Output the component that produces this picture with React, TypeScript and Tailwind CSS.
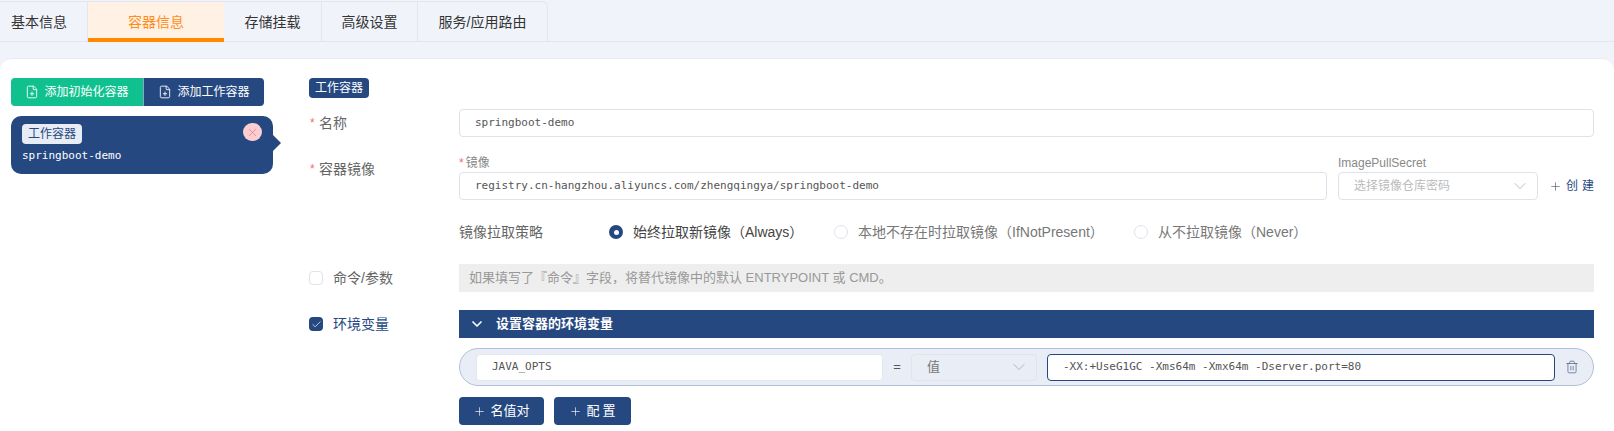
import React from 'react';
import { Check, ChevronDown, FilePlus, Plus, Trash2, X } from 'lucide-react';

const cjk = '[font-family:"Liberation_Sans","Noto_Sans_CJK_SC",sans-serif]';
const inputText = 'font-["DejaVu_Sans_Mono","Noto_Sans_CJK_SC",monospace] text-[11px] text-[#555]';

function Tabs() {
  const tabs = [
    { label: '基本信息', width: 'w-[88px] pl-[11px] justify-start' },
    { label: '容器信息', width: 'w-[136px] justify-center', active: true },
    { label: '存储挂载', width: 'w-[98px] justify-center' },
    { label: '高级设置', width: 'w-[96px] justify-center' },
    { label: '服务/应用路由', width: 'w-[130px] justify-center rounded-tr-md border-r' },
  ];

  return (
    <div className="h-[42px] pt-[1px] border-b border-[#e2e6ef] flex">
      {tabs.map((tab) => (
        <div
          key={tab.label}
          className={`h-[41px] flex items-center text-[14px] border-t border-[#e2e6ef] ${tab.width} ${
            tab.active
              ? 'bg-[#fff1e3] text-[#ff8c1a] border-b-4 border-b-[#ff8a00] pt-[4px]'
              : 'text-[#333] border-r border-r-[#e2e6ef]'
          }`}
        >
          {tab.label}
        </div>
      ))}
    </div>
  );
}

function Sidebar() {
  return (
    <div className="w-[309px] shrink-0 pl-[11px] pt-[19.5px]">
      <div className="flex w-[253px] h-[28px] text-white text-[12px]">
        <button className="w-[133px] bg-[#10c18f] rounded-l flex items-center justify-center gap-[5px] border-r border-[#8fa3c4]">
          <FilePlus size={14} strokeWidth={1.5} />
          添加初始化容器
        </button>
        <button className="flex-1 bg-[#254881] rounded-r flex items-center justify-center gap-[5px]">
          <FilePlus size={14} strokeWidth={1.5} />
          添加工作容器
        </button>
      </div>

      <div className="relative mt-[10px] w-[262px] h-[58px] bg-[#254881] rounded-[10px] pl-[11px] pt-[8px]">
        <div className="flex h-[20px] w-[60px] items-center justify-center rounded bg-[#e8ecf4] text-[#254881] text-[12px]">
          工作容器
        </div>
        <div className={`${inputText} !text-white mt-[4px] leading-[16px]`}>springboot-demo</div>
        <span className="absolute right-[11px] top-[7px] w-[19px] h-[18px] rounded-full bg-[#fbcfd2] flex items-center justify-center text-[#f0666f]">
          <X size={13} strokeWidth={1.2} />
        </span>
        {/* small pointer on the right edge */}
        <span className="absolute left-full top-[19px] w-0 h-0 border-y-[8px] border-y-transparent border-l-[8px] border-l-[#254881]" />
      </div>
    </div>
  );
}

function Label({ children, required }: { children: React.ReactNode; required?: boolean }) {
  return (
    <div className="w-[150px] shrink-0 flex items-center text-[14px] text-[#666] h-[28px] pl-[1px]">
      {required && <span className="text-[#f56c6c] text-[12px] w-[9px]">*</span>}
      {children}
    </div>
  );
}

function TextBox({ value, className = '' }: { value: string; className?: string }) {
  return (
    <div className={`h-[28px] flex items-center bg-white rounded border border-[#dfe2ea] pl-[15px] ${inputText} ${className}`}>
      {value}
    </div>
  );
}

function Radio({ label, checked, className }: { label: string; checked?: boolean; className: string }) {
  return (
    <div className={`flex items-center gap-[10px] text-[14px] ${checked ? 'text-[#444]' : 'text-[#777]'} ${className}`}>
      {checked ? (
        <span className="w-[14px] h-[14px] rounded-full bg-[#254881] flex items-center justify-center">
          <span className="w-[5px] h-[5px] rounded-full bg-white" />
        </span>
      ) : (
        <span className="w-[14px] h-[14px] rounded-full border border-[#dfe2ea] bg-white" />
      )}
      {label}
    </div>
  );
}

function Form() {
  return (
    <div className="flex-1 pr-[20px] pt-[19.5px]">
      <div className="flex h-[20px] w-[60px] items-center justify-center rounded bg-[#254881] text-white text-[12px]">
        工作容器
      </div>

      <div className="flex mt-[11px]">
        <Label required>名称</Label>
        <TextBox value="springboot-demo" className="flex-1" />
      </div>

      <div className="flex mt-[18px]">
        <Label required>容器镜像</Label>
        <div className="flex-1">
          <div className="flex gap-[11px]">
            <div className="flex-1">
              <div className="h-[17px] text-[12px] leading-[17px] text-[#888]">
                <span className="text-[#f56c6c] mr-[2px]">*</span>镜像
              </div>
              <TextBox value="registry.cn-hangzhou.aliyuncs.com/zhengqingya/springboot-demo" />
            </div>
            <div className="w-[200px]">
              <div className="h-[17px] text-[12px] leading-[17px] text-[#888]">ImagePullSecret</div>
              <div className="h-[28px] flex items-center justify-between rounded border border-[#dfe2ea] pl-[15px] pr-[7px] text-[12px] text-[#bbb]">
                选择镜像仓库密码
                <ChevronDown size={20} strokeWidth={0.8} className="text-[#999]" />
              </div>
            </div>
            <div className="w-[45px] h-[28px] mt-[17px] flex items-center justify-between text-[12px] text-[#254881]">
              <Plus size={13} strokeWidth={1.2} className="text-[#555]" />
              <span className="tracking-[4px] mr-[-4px]">创建</span>
            </div>
          </div>

          <div className="flex items-center h-[28px] mt-[18px] text-[14px] text-[#666]">
            <span className="w-[150px]">镜像拉取策略</span>
            <Radio checked label="始终拉取新镜像（Always）" className="w-[225px]" />
            <Radio label="本地不存在时拉取镜像（IfNotPresent）" className="w-[300px]" />
            <Radio label="从不拉取镜像（Never）" className="" />
          </div>
        </div>
      </div>

      <div className="flex mt-[18px]">
        <div className="w-[150px] shrink-0 flex items-center gap-[10px] h-[28px] text-[14px] text-[#666]">
          <span className="w-[14px] h-[14px] rounded-sm border border-[#dfe2ea] bg-white" />
          命令/参数
        </div>
        <div className="flex-1 h-[28px] bg-[#eeeeee] flex items-center pl-[10px] text-[13px] text-[#999]">
          如果填写了『命令』字段，将替代镜像中的默认 ENTRYPOINT 或 CMD。
        </div>
      </div>

      <div className="flex mt-[18px]">
        <div className="w-[150px] shrink-0 flex items-center gap-[10px] h-[28px] text-[14px] text-[#254881]">
          <span className="w-[14px] h-[14px] rounded-sm bg-[#254881] flex items-center justify-center text-white">
            <Check size={11} strokeWidth={1.5} />
          </span>
          环境变量
        </div>
        <div className="flex-1 min-w-0">
          <div className="h-[28px] bg-[#254881] flex items-center text-white text-[13px] font-bold pl-[8px] gap-[9px]">
            <ChevronDown size={20} strokeWidth={2.5} className="w-[20px] h-[16px]" />
            设置容器的环境变量
          </div>

          <div className="h-[38px] mt-[10px] rounded-full bg-[#e9edf5] border border-[#b3c0d6] flex items-center pl-[16px]">
            <TextBox value="JAVA_OPTS" className="w-[407px] !h-[27px] !border-[#e4e7ef]" />
            <span className="w-[28px] text-center text-[13px] text-[#555]">=</span>
            <div className="w-[126px] h-[27px] flex items-center justify-between rounded border border-[#dfe3ec] pl-[15px] pr-[7px] text-[13px] text-[#777]">
              值
              <ChevronDown size={20} strokeWidth={0.8} className="text-[#999]" />
            </div>
            <TextBox value="-XX:+UseG1GC -Xms64m -Xmx64m -Dserver.port=80" className="w-[508px] !h-[27px] ml-[10px] !border-[#254881]" />
            <Trash2 size={14} strokeWidth={1.2} className="ml-[10px] text-[#4a5f85]" />
          </div>

          <div className="flex gap-[10px] mt-[11px] text-white text-[13px]">
            <button className="w-[85px] h-[28px] bg-[#254881] rounded flex items-center justify-center gap-[4px]">
              <Plus size={13} strokeWidth={1.2} />
              名值对
            </button>
            <button className="w-[77px] h-[28px] bg-[#254881] rounded flex items-center justify-center gap-[4px]">
              <Plus size={13} strokeWidth={1.2} />
              <span className="tracking-[3px] mr-[-3px]">配置</span>
            </button>
          </div>
        </div>
      </div>
    </div>
  );
}

export default function App() {
  return (
    <div className={`w-[1614px] h-[431px] overflow-hidden bg-[#f0f3fa] ${cjk}`}>
      <Tabs />
      <div className="mt-[15.5px] h-[374px] bg-white rounded-t-xl border-t border-[#e8ebf2] flex">
        <Sidebar />
        <Form />
      </div>
    </div>
  );
}
